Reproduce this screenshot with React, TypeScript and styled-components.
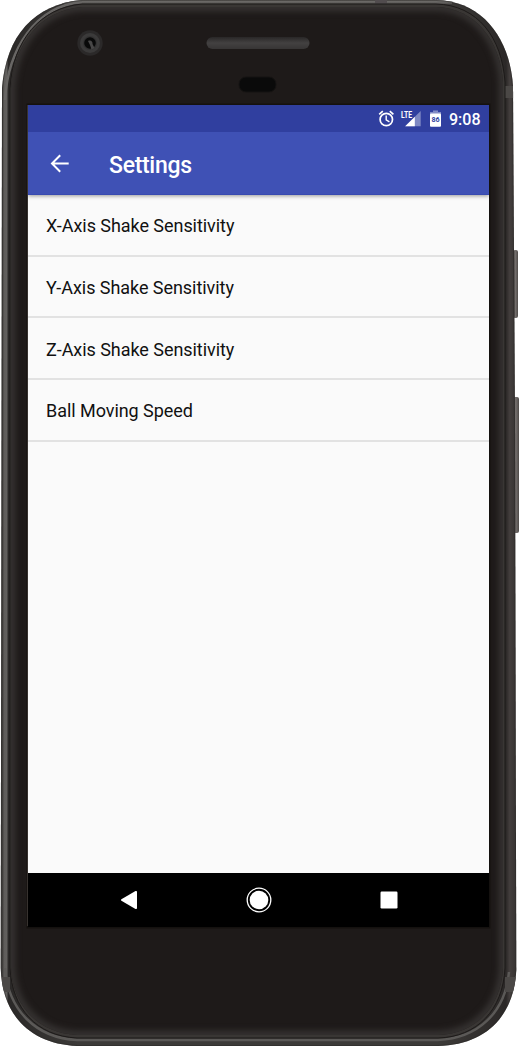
import React from "react";
import styled, { createGlobalStyle } from "styled-components";

const Global = createGlobalStyle`
  * { box-sizing: border-box; }
  body { margin: 0; background: #fff; font-family: Roboto, "Noto Sans", sans-serif; }
`;

const Phone = styled.main`
  position: relative;
  width: 519px;
  height: 1047px;
  padding: 105px 30px 120px 28px;
  overflow: hidden;
`;

const Shell = styled.svg`
  position: absolute;
  inset: 0;
  display: block;
`;

const Screen = styled.div`
  position: relative;
  display: flex;
  flex-direction: column;
  width: 461px;
  height: 822px;
  background: #fafafa;
`;

const StatusBar = styled.div`
  display: flex;
  flex: none;
  align-items: center;
  justify-content: flex-end;
  height: 27px;
  padding-right: 9px;
  background: #303f9f;
  color: #fff;
`;

const StatusIcons = styled.svg`
  display: block;
  margin-right: 6px;
`;

const Clock = styled.time`
  width: 31px;
  padding-top: 1px;
  font-size: 16px;
  font-weight: 500;
  line-height: 27px;
  white-space: nowrap;
`;

const Toolbar = styled.header`
  position: relative;
  display: flex;
  flex: none;
  align-items: center;
  height: 63px;
  padding-left: 22px;
  background: #3f51b5;
  border-bottom: 1px solid #384ab1;
  color: #fff;
  box-shadow: 0 1px 4px rgba(0, 0, 0, 0.4);
  clip-path: inset(0 0 -8px 0);
`;

const BackButton = styled.button`
  display: flex;
  width: 59px;
  padding: 0;
  border: 0;
  background: none;
  color: inherit;
`;

const Title = styled.h1`
  margin: 5px 0 0;
  font-size: 23px;
  font-weight: 500;
  letter-spacing: -0.3px;
  line-height: 30px;
`;

const List = styled.ul`
  flex: 1;
  margin: 0;
  padding: 0;
  list-style: none;
`;

const Row = styled.li`
  display: flex;
  align-items: center;
  height: 61.7px;
  padding: 2.6px 0 0 18px;
  border-bottom: 2px solid #e2e2e2;
  color: #111;
  font-size: 18px;
  letter-spacing: -0.05px;
  line-height: 24px;
`;

const NavBar = styled.nav`
  display: flex;
  flex: none;
  align-items: center;
  justify-content: center;
  gap: 108px;
  height: 54px;
  background: #000;
`;

const NavButton = styled.button`
  display: flex;
  padding: 0;
  border: 0;
  background: none;
`;

const body =
  "M82 0H436C483 1 510 39 513 86L515 420L516.3 970C514 1017 485 1045 438 1046H77C31 1044 2 1016 .7 968L1.5 420L2 88C6 36 34 4 82 0Z";
const seam =
  "M82 4H436C478 5 502 38 505 82V968C503 1010 477 1037 438 1038H77C36 1036 12 1008 10 968V88C13 40 40 8 82 4Z";
const glass =
  "M82 7H436C475 8 500 40 503 82V968C501 1008 475 1034 438 1035H77C38 1033 13 1006 11 968V88C14 42 42 10 82 7Z";

const DeviceShell = () => (
  <Shell width="519" height="1047" viewBox="0 0 519 1047" aria-hidden="true">
    <defs>
      <linearGradient id="metal" x1="0" x2="519" y1="0" y2="0" gradientUnits="userSpaceOnUse">
        <stop offset="0" stopColor="#555" />
        <stop offset=".004" stopColor="#383634" />
        <stop offset=".008" stopColor="#5e5c5a" />
        <stop offset=".013" stopColor="#62605e" />
        <stop offset=".016" stopColor="#2b2928" />
        <stop offset=".022" stopColor="#2b2928" />
        <stop offset=".15" stopColor="#3c3a38" />
        <stop offset=".85" stopColor="#3c3a38" />
        <stop offset=".975" stopColor="#2b2827" />
        <stop offset=".982" stopColor="#433e3d" />
        <stop offset=".99" stopColor="#3b3736" />
        <stop offset="1" stopColor="#302d2c" />
      </linearGradient>
      <linearGradient id="topEdge" x1="0" x2="0" y1="0" y2="5" gradientUnits="userSpaceOnUse">
        <stop offset="0" stopColor="#777572" />
        <stop offset=".65" stopColor="#5b5957" />
        <stop offset="1" stopColor="#302d2c" />
      </linearGradient>
      <linearGradient id="speaker" x1="0" x2="0" y1="0" y2="1">
        <stop offset="0" stopColor="#292727" />
        <stop offset=".5" stopColor="#434141" />
        <stop offset="1" stopColor="#373535" />
      </linearGradient>
      <linearGradient id="sideKey">
        <stop offset="0" stopColor="#363331" />
        <stop offset=".45" stopColor="#76716f" />
        <stop offset="1" stopColor="#4f4b49" />
      </linearGradient>
      <filter id="soften" x="-5%" y="-5%" width="110%" height="110%" colorInterpolationFilters="sRGB">
        <feGaussianBlur stdDeviation="3" />
      </filter>
      <clipPath id="glassClip"><path d={glass} /></clipPath>
      <clipPath id="bodyClip"><path d={body} /></clipPath>
    </defs>
    <rect x="513" y="250" width="5" height="68" rx="2" fill="url(#sideKey)" />
    <rect x="513" y="397" width="6" height="136" rx="2" fill="url(#sideKey)" />
    <path d={body} fill="url(#metal)" />
    <g clipPath="url(#bodyClip)">
      <rect x="62" width="390" height="5" fill="url(#topEdge)" />
      <path d="M5 100C8 48 36 6 82 2" fill="none" stroke="#686664" strokeWidth="2.5" />
      <path d="M5 968C8 1010 36 1038 77 1040H438C478 1038 505 1013 509 972" fill="none" stroke="#5b5957" strokeWidth="2.5" />
      <path d={body} fill="none" stroke="#2c2a28" strokeOpacity=".55" strokeWidth="2" />
      <rect x="375" width="12" height="6" fill="#514c4e" />
      <rect x="505" y="86" width="9" height="12" fill="#4b4846" />
      <rect x="2" y="977" width="8" height="15" fill="#4b4846" />
      <rect x="505" y="977" width="11" height="15" fill="#4b4846" />
    </g>
    <path d={seam} fill="#393634" stroke="#1d1a19" />
    <path d={glass} fill="#1e1a19" />
    <g clipPath="url(#glassClip)">
      <path d={glass} fill="none" stroke="#373433" strokeWidth="8" filter="url(#soften)" />
    </g>
    <circle cx="90" cy="43" r="12.7" fill="#2b2929" />
    <circle cx="90" cy="43" r="10" fill="#3b3a3a" />
    <circle cx="90" cy="43" r="7" fill="#333232" />
    <circle cx="90" cy="43" r="5.8" fill="#090909" />
    <path d="M88 41C91 39.5 93 42 92.5 44L94.5 48L91.5 49.5L90 45Z" fill="#484747" />
    <rect x="206.5" y="37" width="103" height="12" rx="6" fill="url(#speaker)" />
    <rect x="239" y="77" width="37" height="15" rx="7" fill="#0a0a0a" stroke="#151312" />
    <rect x="26.5" y="103.5" width="464" height="825" fill="#14110f" />
    <path d="M27.5 105V926" stroke="#37322f" />
  </Shell>
);

const rows = [
  "X-Axis Shake Sensitivity",
  "Y-Axis Shake Sensitivity",
  "Z-Axis Shake Sensitivity",
  "Ball Moving Speed",
];

export default function App() {
  return (
    <>
      <Global />
      <Phone>
        <DeviceShell />
        <Screen>
          <StatusBar>
            <StatusIcons width="65" height="27" viewBox="378 105 65 27">
              <g fill="none" stroke="#fff" strokeWidth="1.7">
                <circle cx="386.3" cy="119.5" r="6.2" />
                <path d="M386.2 115.5V119.9L389.4 121.8" strokeWidth="1.4" />
                <path d="M379.2 114.3L382.8 111.2M389.8 111.2L393.4 114.3" />
              </g>
              <path d="M420.7 111V126.2H405.2Z" fill="#fff" fillOpacity=".38" />
              <path d="M414.8 116.8V126.2H405.2Z" fill="#fff" />
              <rect x="400" y="109.5" width="12.5" height="9.2" fill="#303f9f" />
              <text x="401" y="117.8" fill="#fff" fontFamily="Roboto, sans-serif" fontSize="9.8" fontWeight="700" textLength="11" lengthAdjust="spacingAndGlyphs">LTE</text>
              <path d="M433 110.5H438V112H433Z" fill="#fff" fillOpacity=".4" />
              <path d="M430 112H441V114.5H430Z" fill="#fff" fillOpacity=".4" />
              <rect x="430" y="113.5" width="11" height="13.2" rx="1" fill="#fff" />
              <text x="431.4" y="121.8" fill="#303f9f" fontFamily="Roboto, sans-serif" fontSize="8" fontWeight="700" textLength="8.2" lengthAdjust="spacingAndGlyphs">86</text>
            </StatusIcons>
            <Clock>9:08</Clock>
          </StatusBar>
          <Toolbar>
            <BackButton aria-label="Back">
              <svg width="20" height="20" viewBox="0 0 20 20" fill="none" stroke="#fff" strokeWidth="2">
                <path d="M10.2 2.2L2 10.5L10.2 18.8M2 10.5H18.7" />
              </svg>
            </BackButton>
            <Title>Settings</Title>
          </Toolbar>
          <List>
            {rows.map((label) => (
              <Row key={label}>{label}</Row>
            ))}
          </List>
          <NavBar>
            <NavButton aria-label="Back">
              <svg width="18" height="20" viewBox="0 0 18 20">
                <path d="M1.4 9.3L15.5 1.1Q17 .4 17 2V18Q17 19.6 15.5 18.9L1.4 10.7Q.4 10 1.4 9.3Z" fill="#fff" />
              </svg>
            </NavButton>
            <NavButton aria-label="Home">
              <svg width="26" height="26" viewBox="0 0 26 26">
                <circle cx="13" cy="13" r="11.8" fill="none" stroke="#fff" strokeWidth="1.3" />
                <circle cx="13" cy="13" r="9.3" fill="#fff" />
              </svg>
            </NavButton>
            <NavButton aria-label="Recent apps">
              <svg width="18" height="18" viewBox="0 0 18 18">
                <rect x=".5" y=".5" width="17" height="17" rx="1.2" fill="#fff" />
              </svg>
            </NavButton>
          </NavBar>
        </Screen>
      </Phone>
    </>
  );
}
